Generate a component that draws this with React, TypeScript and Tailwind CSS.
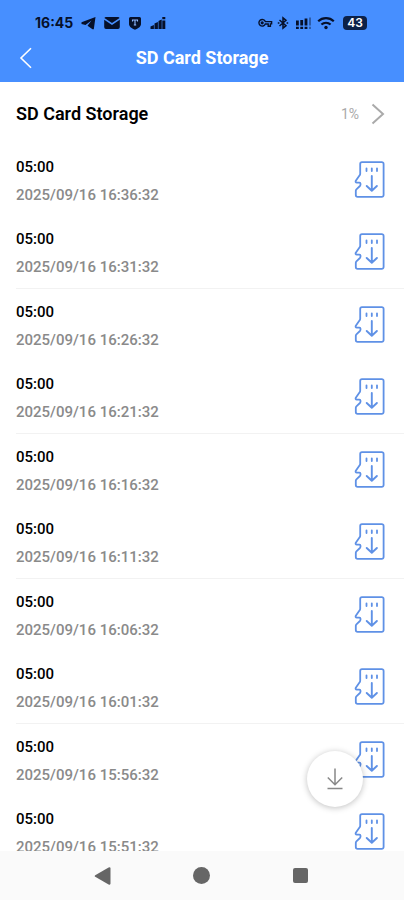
import type { SVGProps } from "react";

type Recording = {
  duration: string;
  startedAt: string;
};

const RECORDINGS: Recording[] = [
  { duration: "05:00", startedAt: "2025/09/16 16:36:32" },
  { duration: "05:00", startedAt: "2025/09/16 16:31:32" },
  { duration: "05:00", startedAt: "2025/09/16 16:26:32" },
  { duration: "05:00", startedAt: "2025/09/16 16:21:32" },
  { duration: "05:00", startedAt: "2025/09/16 16:16:32" },
  { duration: "05:00", startedAt: "2025/09/16 16:11:32" },
  { duration: "05:00", startedAt: "2025/09/16 16:06:32" },
  { duration: "05:00", startedAt: "2025/09/16 16:01:32" },
  { duration: "05:00", startedAt: "2025/09/16 15:56:32" },
  { duration: "05:00", startedAt: "2025/09/16 15:51:32" },
];

const SdCardIcon = (props: SVGProps<SVGSVGElement>) => (
  <svg
    viewBox="0 0 31 38"
    fill="none"
    stroke="currentColor"
    strokeLinecap="round"
    strokeLinejoin="round"
    {...props}
  >
    <path
      strokeWidth="1.8"
      d="M8 1.2h19.8a1.8 1.8 0 0 1 1.8 1.8v31a1.8 1.8 0 0 1-1.800 1.800H3.600a1.800 1.800 0 0 1-1.800-1.800v-4.200c0-.7.2-1.100.6-1.500l3.500-3.300c.5-.5.6-.8.6-1.400v-.8c0-.8-.4-1.200-1.100-1.200H2.800c-1.100 0-1.500-1-1-1.900l4-5.600c.3-.4.4-.8.4-1.300V3c0-1 .8-1.800 1.800-1.800z"
    />
    <path strokeWidth="1.8" d="M12.500 7.300v2.700M17.800 7.300v2.700M23 7.300v2.700" />
    <path strokeWidth="1.9" d="M17.800 15v14.400M12.700 25l5.100 4.800 5.100-4.800" />
  </svg>
);

const StatusBar = () => (
  <div className="flex h-[33px] items-end justify-between pr-[37px] pl-[35px] text-[#06102a]">
    <div className="flex h-5 items-center gap-2">
      <span className="font-[Inter,sans-serif] text-sm leading-5 font-bold">
        16:45
      </span>
      <svg width="15" height="14" viewBox="0 0 15 14" fill="currentColor">
        <path d="M14.500 1 .5 6.300v1.600l4 1.200 6-4.600-4 5.300 5 3.400h1.300z" />
      </svg>
      <svg width="16" height="14" viewBox="0 0 16 14" fill="currentColor">
        <path d="M2 1h12a1.800 1.800 0 0 1 1.600 1L8 7 .4 2A1.800 1.800 0 0 1 2 1zM.2 3.800 8 9l7.800-5.200V11A2 2 0 0 1 14 13H2a2 2 0 0 1-1.800-2z" />
      </svg>
      <svg width="14" height="14" viewBox="0 0 14 14">
        <path
          fill="currentColor"
          d="M2.500 1h9A1.500 1.500 0 0 1 13 2.500v5.500c0 2.700-3 4.500-6 5.700C4 12.500 1 10.700 1 8V2.500A1.500 1.500 0 0 1 2.500 1z"
        />
        <path
          d="M4.500 5.500V4h5v1.500M7 4v5M5.800 9h2.400"
          fill="none"
          stroke="#8fb8ff"
          strokeWidth="1.100"
        />
      </svg>
      <svg width="16" height="14" viewBox="0 0 16 14" fill="currentColor">
        <path d="M.5 10.500 3.900 9v4H.5zM4.500 7.500l3.400-1.500V13H4.500zM8.500 5l3.200-1.500V13H8.500zM12.300 4.500h3V13h-3zM12.300 1h3v2.300h-3z" />
      </svg>
    </div>
    <div className="flex h-5 items-center gap-1">
      <svg
        width="15"
        height="10"
        viewBox="0 0 15 10"
        fill="none"
        stroke="currentColor"
        strokeWidth="1.400"
      >
        <path d="M7.300 3.600H13.600V5.900H12.400V8.200H10.200V6H7.300A3.300 3.300 0 1 1 7.300 3.600z" />
        <circle cx="4.200" cy="4.800" r=".9" fill="currentColor" />
      </svg>
      <svg
        width="12"
        height="14"
        viewBox="0 0 12 14"
        fill="none"
        stroke="currentColor"
        strokeWidth="1.500"
      >
        <path d="M2.500 4l6.500 5.700L6 12.200V1.800L9 4.300 2.500 10" />
        <path d="M.8 7h1.600M9.600 7h1.600" strokeWidth="1.700" />
      </svg>
      <svg width="20" height="14" viewBox="0 0 20 14" fill="currentColor">
        <path d="M3 4.500h2.800V9.500H3zM7.300 4h2.800v5.500H7.300zM11.600 2.500h2.800v7h-2.800zM3 10.700h2.800V13H3zM7.300 10.700h2.800V13H7.300zM11.600 10.700h2.800V13h-2.800z" />
        <path
          d="M16 1.500h2v8h-2zM16 10.700h2V13h-2z"
          opacity=".4"
        />
      </svg>
      <svg
        width="18"
        height="14"
        viewBox="0 0 18 14"
        fill="none"
        stroke="currentColor"
        strokeWidth="2.200"
      >
        <path d="M1.200 5.200a11.500 11.500 0 0 1 15.600 0M4.400 8.500a7 7 0 0 1 9.200 0" />
        <circle cx="9" cy="11.500" r="1.700" fill="currentColor" stroke="none" />
      </svg>
      <span className="ml-1 flex h-[14px] w-6 items-center justify-center rounded bg-[#0c2148] font-[Inter,sans-serif] text-xs font-semibold text-white">
        43
      </span>
    </div>
  </div>
);

const RecordingRow = ({ duration, startedAt }: Recording) => (
  <div className="flex h-[72px] items-center justify-between pr-[19px]">
    <div className="flex flex-col gap-2 pt-0.5 text-[15px] leading-5 font-medium">
      <span className="text-black">{duration}</span>
      <span className="text-[#8a8a8a]">{startedAt}</span>
    </div>
    <button
      type="button"
      aria-label={`Download ${startedAt}`}
      className="text-[#5f91e6]"
    >
      <SdCardIcon className="h-[38px] w-[31px]" />
    </button>
  </div>
);

const NavigationBar = () => (
  <nav className="grid h-[49px] shrink-0 grid-cols-3 items-center bg-[#fafafa] px-[54px] text-[#666]">
    <button type="button" aria-label="Back" className="flex justify-center">
      <svg width="18" height="18" viewBox="0 0 18 18" fill="currentColor">
        <path d="M1.200 8.200 14.600.6Q16.500-.2 16.500 1.500v15q0 1.700-1.900.9L1.200 9.800Q.2 9 1.200 8.200z" />
      </svg>
    </button>
    <button type="button" aria-label="Home" className="flex justify-center">
      <span className="size-[17px] rounded-full bg-current" />
    </button>
    <button type="button" aria-label="Recents" className="flex justify-center">
      <span className="size-[15px] rounded-xs bg-current" />
    </button>
  </nav>
);

const App = () => {
  return (
    <div className="flex h-screen flex-col bg-white font-[Roboto,sans-serif]">
      <header className="h-[82px] shrink-0 bg-[#478fff]">
        <StatusBar />
        <div className="grid h-[49px] grid-cols-[48px_1fr_48px] items-center text-white">
          <button type="button" aria-label="Go back" className="pl-[19px]">
            <svg
              width="14"
              height="22"
              viewBox="0 0 14 22"
              fill="none"
              stroke="currentColor"
              strokeWidth="1.600"
            >
              <path d="M12 1.200 2 11l10 9.800" />
            </svg>
          </button>
          <h1 className="text-center text-lg leading-6 font-bold">
            SD Card Storage
          </h1>
        </div>
      </header>

      <main className="relative min-h-0 flex-1">
        <div className="h-full overflow-hidden">
          <button
            type="button"
            className="flex h-[62px] w-full items-center justify-between pt-0.5 pr-[19px] pl-4"
          >
            <span className="text-lg leading-6 font-semibold text-black">
              SD Card Storage
            </span>
            <span className="flex items-center gap-3 text-sm text-[#aaa]">
              1%
              <svg
                width="14"
                height="22"
                viewBox="0 0 14 22"
                fill="none"
                stroke="currentColor"
                strokeWidth="2"
              >
                <path d="M1.500 1.500 12 11 1.500 20.500" />
              </svg>
            </span>
          </button>
          <ul className="pl-4">
            {RECORDINGS.map((recording) => (
              <li
                key={recording.startedAt}
                className="border-[#f2f2f2] even:border-b"
              >
                <RecordingRow {...recording} />
              </li>
            ))}
          </ul>
        </div>

        <button
          type="button"
          aria-label="Downloads"
          className="absolute right-[41px] bottom-[44px] flex size-14 items-center justify-center rounded-full bg-white text-[#888] shadow-[0_1px_6px_rgba(0,0,0,0.25)]"
        >
          <svg
            width="18"
            height="22"
            viewBox="0 0 18 22"
            fill="none"
            stroke="currentColor"
            strokeWidth="1.500"
          >
            <path d="M9 .5v16M1.800 9.500 9 16.700l7.200-7.200M1.500 20.500h15" />
          </svg>
        </button>
      </main>

      <NavigationBar />
    </div>
  );
};

export default App;
